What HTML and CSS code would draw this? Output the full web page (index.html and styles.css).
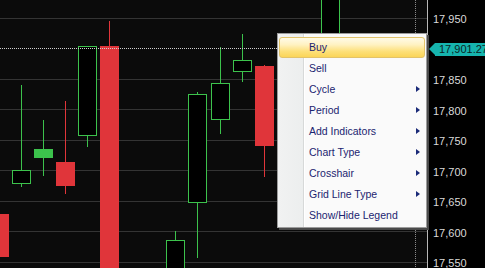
FILE: index.html
```html
<!DOCTYPE html>
<html>
<head>
<meta charset="utf-8">
<link rel="stylesheet" href="styles.css">
</head>
<body>
<div class="app">
  <div class="chart">
    <svg class="plot" width="427" height="268" viewBox="0 0 427 268">
      <g class="grid">
        <rect x="0" y="18" width="427" height="1"/>
        <rect x="0" y="79" width="427" height="1"/>
        <rect x="0" y="109" width="427" height="1"/>
        <rect x="0" y="140" width="427" height="1"/>
        <rect x="0" y="170" width="427" height="1"/>
        <rect x="0" y="201" width="427" height="1"/>
        <rect x="0" y="231" width="427" height="1"/>
        <rect x="0" y="262" width="427" height="1"/>
      </g>
      <line class="vdots" x1="415.5" y1="0" x2="415.5" y2="268"/>
      <!-- candles -->
      <g class="up">
        <line x1="21.5" y1="85" x2="21.5" y2="187"/>
        <rect class="hollow" x="12.5" y="170.5" width="18" height="13"/>
        <line x1="43.5" y1="120" x2="43.5" y2="176"/>
        <rect class="solid" x="34" y="149" width="19" height="9"/>
        <line x1="87.5" y1="135" x2="87.5" y2="147"/>
        <rect class="hollow" x="78.5" y="46.5" width="18" height="89"/>
        <line x1="175.5" y1="231" x2="175.5" y2="240"/>
        <rect class="hollow" x="166.5" y="240.5" width="18" height="40"/>
        <line x1="197.5" y1="92" x2="197.5" y2="258"/>
        <rect class="hollow" x="188.5" y="94.5" width="18" height="108"/>
        <line x1="220.5" y1="47" x2="220.5" y2="134"/>
        <rect class="hollow" x="211.5" y="83.5" width="18" height="36"/>
        <line x1="242.5" y1="34" x2="242.5" y2="82"/>
        <rect class="hollow" x="233.5" y="60.5" width="18" height="11"/>
        <rect class="hollow" x="321.5" y="-5" width="18" height="45"/>
      </g>
      <g class="down">
        <rect class="solid" x="0" y="214" width="9" height="43"/>
        <line x1="65.5" y1="101" x2="65.5" y2="194"/>
        <rect class="solid" x="56" y="162" width="19" height="24"/>
        <line x1="109.5" y1="21" x2="109.5" y2="46"/>
        <rect class="solid" x="100" y="46" width="19" height="222"/>
        <line x1="264.5" y1="65" x2="264.5" y2="177"/>
        <rect class="solid" x="255" y="66" width="19" height="80"/>
      </g>
      <line class="price" x1="0" y1="48.5" x2="427" y2="48.5"/>
    </svg>

    <ul class="menu">
      <li class="item active">Buy</li>
      <li class="item">Sell</li>
      <li class="item sub">Cycle</li>
      <li class="item sub">Period</li>
      <li class="item sub">Add Indicators</li>
      <li class="item sub">Chart Type</li>
      <li class="item sub">Crosshair</li>
      <li class="item sub">Grid Line Type</li>
      <li class="item">Show/Hide Legend</li>
    </ul>
  </div>

  <div class="axis">
    <div class="tick">17,950</div>
    <div class="tick"><span class="tag">17,901.27</span></div>
    <div class="tick">17,850</div>
    <div class="tick">17,800</div>
    <div class="tick">17,750</div>
    <div class="tick">17,700</div>
    <div class="tick">17,650</div>
    <div class="tick">17,600</div>
    <div class="tick">17,550</div>
  </div>
</div>
</body>
</html>
```

FILE: styles.css
```css
html, body {
  margin: 0;
  padding: 0;
  background: #000;
  overflow: hidden;
}

.app {
  display: flex;
  width: 485px;
  height: 268px;
}

.chart {
  position: relative;
  width: 427px;
  height: 268px;
  background: #0b0b0b;
  flex: none;
}

.plot {
  display: block;
}

.grid rect {
  fill: #343434;
}

.vdots {
  stroke: #8a8a8a;
  stroke-width: 1;
  stroke-dasharray: 1 1;
}

.price {
  stroke: #cfcfcf;
  stroke-width: 1;
  stroke-dasharray: 1 1;
}

.up line {
  stroke: #3cc24c;
  stroke-width: 1;
}

.up .hollow {
  fill: #000;
  stroke: #3cc24c;
  stroke-width: 1;
}

.up .solid {
  fill: #3cc24c;
}

.down line {
  stroke: #e0353a;
  stroke-width: 1;
}

.down .solid {
  fill: #e0353a;
}

/* context menu */
.menu {
  position: absolute;
  left: 277px;
  top: 33px;
  width: 146px;
  height: 190px;
  margin: 0;
  padding: 3px 1px 0 1px;
  list-style: none;
  border: 1px solid #9c9c9c;
  background:
    linear-gradient(to right, #f1f2f2 0, #eceeee 25px, #d7d9d9 25px, #d7d9d9 26px, #ffffff 26px, #ffffff 27px, #fafafa 27px);
  box-shadow: 2px 2px 0 #4a4a4a;
  font-family: "Liberation Sans", Arial, sans-serif;
  font-size: 10.5px;
  color: #1a2470;
}

.item {
  position: relative;
  height: 21px;
  line-height: 21px;
  padding-left: 30px;
  box-sizing: border-box;
}

.item.active {
  border: 1px solid #e2c36a;
  border-radius: 3px;
  line-height: 19px;
  padding-left: 29px;
  background: linear-gradient(to bottom, #fffbe8 0%, #fff2c2 35%, #fde07a 70%, #fbd558 100%);
}

.item.sub::after {
  content: "";
  position: absolute;
  right: 5px;
  top: 7px;
  border-left: 4px solid #1a2a78;
  border-top: 3.5px solid transparent;
  border-bottom: 3.5px solid transparent;
}

/* price axis */
.axis {
  flex: 1;
  border-left: 1px solid #b8b8b8;
  background: #000;
  display: flex;
  flex-direction: column;
  padding-top: 3.75px;
  font-family: "Liberation Sans", Arial, sans-serif;
  font-size: 11px;
  color: #dadada;
}

.tick {
  height: 30.5px;
  flex: none;
  display: flex;
  align-items: center;
  padding-left: 5px;
}

.tag {
  position: relative;
  margin-left: 2px;
  height: 13px;
  line-height: 13px;
  padding-left: 4px;
  padding-right: 10px;
  background: #16b4ae;
  color: #0a2424;
  white-space: nowrap;
}

.tag::before {
  content: "";
  position: absolute;
  left: -6px;
  top: 0;
  border-right: 6px solid #16b4ae;
  border-top: 6.5px solid transparent;
  border-bottom: 6.5px solid transparent;
}
```
